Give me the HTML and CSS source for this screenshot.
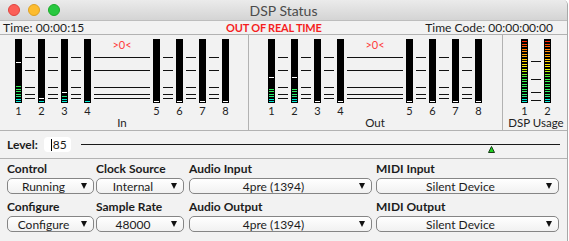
FILE: index.html
```html
<html>
  <head>
    <link rel="stylesheet" href="styles.css">
    <title>DSP Status</title>
  </head>
  <body>
    <div class="window">
      <div class="titlebar">
        <div class="lights">
          <span class="light red"></span>
          <span class="light yellow"></span>
          <span class="light green"></span>
        </div>
        <div class="title">DSP Status</div>
        <div></div>
      </div>

      <div class="status">
        <span class="time">Time: 00:00:15</span>
        <span class="warn">OUT OF REAL TIME</span>
        <span class="timecode">Time Code: 00:00:00:00</span>
      </div>

      <div class="meters">
        <!-- input bank -->
        <div class="group group-in">
          <div class="rack">
            <div class="bank">
              <div class="ch"><div class="bar"><div class="level" style="height:16px"></div><div class="peak" style="bottom:40px"></div></div><span class="num">1</span></div>
              <div class="scale"></div>
              <div class="ch"><div class="bar"><div class="level" style="height:1px"></div><div class="peak" style="bottom:4px"></div></div><span class="num">2</span></div>
              <div class="scale"></div>
              <div class="ch"><div class="bar"><div class="level" style="height:6px"></div><div class="peak" style="bottom:10px"></div></div><span class="num">3</span></div>
              <div class="scale"></div>
              <div class="ch"><div class="bar"><div class="level" style="height:1px"></div></div><span class="num">4</span></div>
              <div class="scale scale-wide"><span class="over">&gt;0&lt;</span></div>
              <div class="ch"><div class="bar"><div class="peak" style="bottom:1px"></div></div><span class="num">5</span></div>
              <div class="scale"></div>
              <div class="ch"><div class="bar"><div class="peak" style="bottom:1px"></div></div><span class="num">6</span></div>
              <div class="scale"></div>
              <div class="ch"><div class="bar"><div class="peak" style="bottom:1px"></div></div><span class="num">7</span></div>
              <div class="scale"></div>
              <div class="ch"><div class="bar"><div class="peak" style="bottom:1px"></div></div><span class="num">8</span></div>
            </div>
            <div class="caption">In</div>
          </div>
        </div>

        <!-- output bank -->
        <div class="group group-out">
          <div class="rack">
            <div class="bank">
              <div class="ch"><div class="bar"><div class="level" style="height:13px"></div><div class="peak" style="bottom:25px"></div></div><span class="num">1</span></div>
              <div class="scale"></div>
              <div class="ch"><div class="bar"><div class="level" style="height:13px"></div><div class="peak" style="bottom:25px"></div></div><span class="num">2</span></div>
              <div class="scale"></div>
              <div class="ch"><div class="bar"><div class="peak" style="bottom:1px"></div></div><span class="num">3</span></div>
              <div class="scale"></div>
              <div class="ch"><div class="bar"><div class="peak" style="bottom:1px"></div></div><span class="num">4</span></div>
              <div class="scale scale-wide"><span class="over">&gt;0&lt;</span></div>
              <div class="ch"><div class="bar"><div class="peak" style="bottom:1px"></div></div><span class="num">5</span></div>
              <div class="scale"></div>
              <div class="ch"><div class="bar"><div class="peak" style="bottom:1px"></div></div><span class="num">6</span></div>
              <div class="scale"></div>
              <div class="ch"><div class="bar"><div class="peak" style="bottom:1px"></div></div><span class="num">7</span></div>
              <div class="scale"></div>
              <div class="ch"><div class="bar"><div class="peak" style="bottom:1px"></div></div><span class="num">8</span></div>
            </div>
            <div class="caption">Out</div>
          </div>
        </div>

        <!-- dsp usage -->
        <div class="group group-dsp">
          <div class="rack">
            <div class="bank">
              <div class="ch"><div class="bar"><div class="level" style="height:62px"></div></div><span class="num">1</span></div>
              <div class="scale scale-dsp"></div>
              <div class="ch"><div class="bar"><div class="level" style="height:62px"></div></div><span class="num">2</span></div>
            </div>
            <div class="caption">DSP Usage</div>
          </div>
        </div>
      </div>

      <div class="levelrow">
        <span class="label">Level:</span>
        <div class="field"><span class="caret"></span>85</div>
        <div class="slider">
          <svg class="thumb" style="left:85%" width="7" height="7" viewBox="0 0 7 7">
            <path d="M3.5 0.5 L6.5 6.5 L0.5 6.5 Z" fill="#1fd11f" stroke="#1a3a1a" stroke-width="1"/>
          </svg>
        </div>
      </div>

      <div class="controls">
        <div class="col col-control">
          <span class="label">Control</span>
          <div class="select"><span class="value">Running</span><span class="arrow"></span></div>
          <span class="label">Configure</span>
          <div class="select"><span class="value">Configure</span><span class="arrow"></span></div>
        </div>
        <div class="col col-clock">
          <span class="label">Clock Source</span>
          <div class="select"><span class="value">Internal</span><span class="arrow"></span></div>
          <span class="label">Sample Rate</span>
          <div class="select"><span class="value">48000</span><span class="arrow"></span></div>
        </div>
        <div class="col col-audio">
          <span class="label">Audio Input</span>
          <div class="select"><span class="value">4pre (1394)</span><span class="arrow"></span></div>
          <span class="label">Audio Output</span>
          <div class="select"><span class="value">4pre (1394)</span><span class="arrow"></span></div>
        </div>
        <div class="col col-midi">
          <span class="label">MIDI Input</span>
          <div class="select"><span class="value">Silent Device</span><span class="arrow"></span></div>
          <span class="label">MIDI Output</span>
          <div class="select"><span class="value">Silent Device</span><span class="arrow"></span></div>
        </div>
      </div>
    </div>
  </body>
</html>
```

FILE: styles.css
```css
* {
  box-sizing: border-box;
}
body {
  margin: 0;
  background: #fff;
  font-family: Lato, "Liberation Sans", sans-serif;
  color: #1c1c1c;
}

.window {
  width: 568px;
  height: 241px;
  background: #f2f2f2;
  border-right: 1px solid #a8a8a8;
  border-top-right-radius: 5px;
  overflow: hidden;
}

/* title bar */
.titlebar {
  height: 21px;
  display: grid;
  grid-template-columns: 1fr auto 1fr;
  align-items: center;
  background: linear-gradient(#ebebeb, #d4d4d4);
  border-bottom: 1px solid #bdbdbd;
}
.lights {
  display: flex;
  gap: 8px;
  padding-left: 8px;
}
.light {
  width: 12px;
  height: 12px;
  border-radius: 50%;
}
.red { background: #fc5f57; border: 1px solid #e0443e; }
.yellow { background: #fdbc2e; border: 1px solid #dea123; }
.green { background: #28c840; border: 1px solid #1aab29; }
.title {
  font-size: 14px;
  color: #4b4b4b;
}

/* status */
.status {
  height: 14px;
  display: flex;
  font-size: 12px;
  line-height: 13px;
  padding-left: 3px;
  border-bottom: 1px solid #b2b2b2;
}
.time {
  width: 223px;
  letter-spacing: 0.1px;
}
.warn {
  color: #f51f1f;
  font-weight: bold;
  font-size: 11px;
  letter-spacing: -0.2px;
}
.timecode {
  margin-left: auto;
  margin-right: 14px;
}

/* meters */
.meters {
  height: 96px;
  display: flex;
  border-bottom: 1px solid #b2b2b2;
}
.group {
  padding-top: 4px;
  flex-shrink: 0;
}
.group-in {
  width: 249px;
  padding-left: 15px;
  border-right: 1px solid #b2b2b2;
}
.group-out {
  width: 254px;
  padding-left: 19px;
  border-right: 1px solid #b2b2b2;
}
.group-dsp {
  flex: 1;
  padding-left: 18px;
}
.rack {
  width: fit-content;
}
.bank {
  display: flex;
  align-items: flex-start;
}
.ch {
  width: 7px;
  display: flex;
  flex-direction: column;
  align-items: center;
}
.bar {
  width: 7px;
  height: 64px;
  background: #000;
  position: relative;
}
.level {
  position: absolute;
  left: 1px;
  right: 1px;
  bottom: 1px;
  background:
    repeating-linear-gradient(to top, transparent 0 1px, #000 1px 2px, transparent 2px 3px, #000 3px 5px),
    linear-gradient(to top, #00ecd8 0, #00ecd8 3px, #2de86c 6px, #33f040 40%, #a8f000 48%, #f6f200 55%, #ffd200 66%, #ff9a00 78%, #ff6a00 88%, #ff2200 97%) bottom / 100% 62px no-repeat;
}
.peak {
  position: absolute;
  left: 1px;
  width: 5px;
  height: 1px;
  background: #fff;
}
.num {
  font-size: 11px;
  line-height: 11px;
  margin-top: 2px;
  color: #222;
}
.scale {
  width: 10px;
  height: 64px;
  margin: 0 3px;
  background:
    linear-gradient(#111, #111) 0 18px / 100% 1px no-repeat,
    linear-gradient(#111, #111) 0 31px / 100% 1px no-repeat,
    linear-gradient(#111, #111) 0 48px / 100% 1px no-repeat,
    linear-gradient(#111, #111) 0 55px / 100% 1px no-repeat,
    linear-gradient(#111, #111) 0 59px / 100% 1px no-repeat;
}
.scale-wide {
  width: 56px;
  text-align: center;
}
.scale-dsp {
  background:
    linear-gradient(#111, #111) 0 22px / 100% 1px no-repeat,
    linear-gradient(#111, #111) 0 40px / 100% 1px no-repeat,
    linear-gradient(#111, #111) 0 53px / 100% 1px no-repeat,
    linear-gradient(#111, #111) 0 61px / 100% 1px no-repeat;
}
.over {
  display: block;
  font-size: 11px;
  line-height: 12px;
  color: #ff3b3b;
}
.caption {
  width: 0;
  margin: 1px auto 0;
  display: flex;
  justify-content: center;
  font-size: 11.5px;
  line-height: 11px;
  white-space: nowrap;
  color: #222;
}

/* level */
.levelrow {
  height: 28px;
  display: flex;
  align-items: center;
  padding-left: 7px;
  border-bottom: 1px solid #b2b2b2;
}
.label {
  font-size: 12px;
  font-weight: bold;
  line-height: 15px;
  color: #1c1c1c;
}
.field {
  width: 27px;
  height: 15px;
  margin-left: 6px;
  padding-left: 7px;
  display: flex;
  align-items: center;
  background: #fff;
  border-radius: 4px;
  font-size: 12px;
}
.caret {
  width: 1px;
  height: 12px;
  background: #000;
  margin-right: 1px;
}
.slider {
  flex: 1;
  align-self: stretch;
  margin: 0 7px 0 10px;
  position: relative;
  background: linear-gradient(#1a1a1a, #1a1a1a) 0 13px / 100% 1px no-repeat;
}
.thumb {
  position: absolute;
  top: 15px;
}

/* controls */
.controls {
  display: flex;
  padding: 2px 0 0 7px;
}
.col {
  display: flex;
  flex-direction: column;
}
.col-control { width: 89px; }
.col-clock { width: 93px; }
.col-audio { width: 187px; }
.col-midi { width: 183px; }
.col-control .select { width: 87px; }
.col-clock .select { width: 88px; }
.col-audio .select,
.col-midi .select { width: 183px; }

.select {
  height: 16px;
  margin: 2px 0 5px;
  display: flex;
  align-items: center;
  border: 1px solid #858585;
  border-radius: 5px;
  background: linear-gradient(#ffffff, #f1f1f1);
  font-size: 12px;
  color: #1c1c1c;
}
.value {
  flex: 1;
  text-align: center;
  padding-left: 2px;
}
.arrow {
  width: 0;
  height: 0;
  margin: 0 6px 0 4px;
  border-left: 3.5px solid transparent;
  border-right: 3.5px solid transparent;
  border-top: 6px solid #111;
}
```
